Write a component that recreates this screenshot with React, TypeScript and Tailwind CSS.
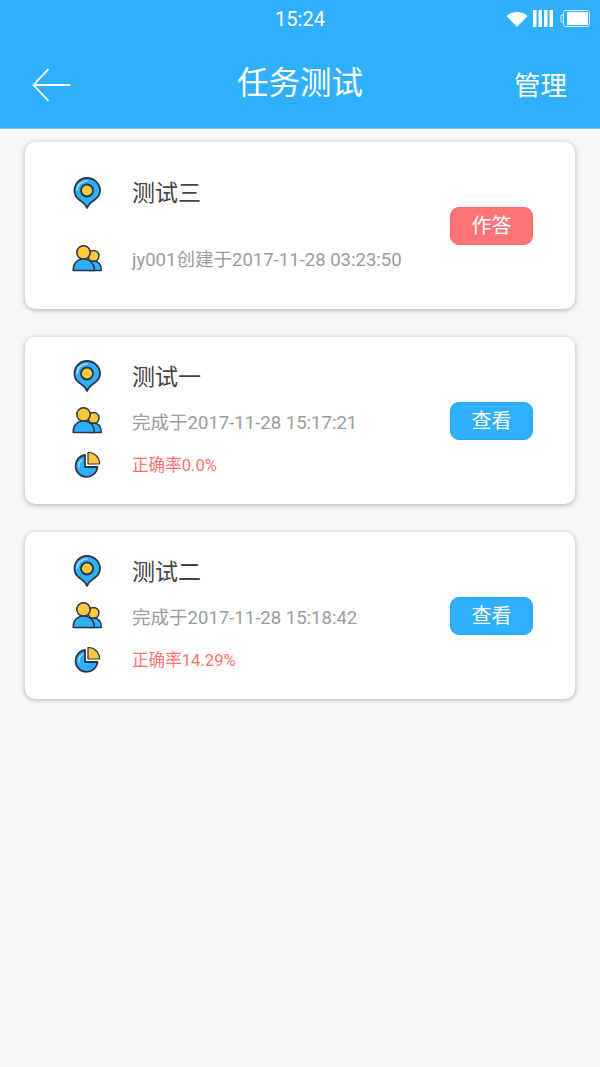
const PinIcon = () => (
    <svg width="30" height="34" viewBox="0 0 30 34" className="shrink-0">
        <path d="M15 32 C13.5 27.5 10 26 7 23.5 C3.5 21 2.5 17.5 2.5 14.5 C2.5 7.5 8 2 15 2 C22 2 28 7.5 28 14.5 C28 17.5 26.5 21 23 23.5 C20 26 16.5 27.5 15 32 Z" fill="#2fb0ff" stroke="#2b3446" strokeWidth="1.8" strokeLinejoin="round" />
        <path d="M5 14.5 C5 9 9.5 5 15 5" fill="none" stroke="#a9e0ff" strokeWidth="1.5" strokeLinecap="round" />
        <circle cx="15" cy="14.5" r="6" fill="#ffc83d" stroke="#2b3446" strokeWidth="1.8" />
    </svg>
);

const UsersIcon = () => (
    <svg width="30" height="28" viewBox="0 0 30 28" className="shrink-0">
        <circle cx="21.5" cy="11" r="5.5" fill="#ffc83d" stroke="#2b3446" strokeWidth="1.4" />
        <path d="M17 25.5 H29.2 C29.4 20 26.5 16.5 22 16 C18 16 16 19 17 25.5 Z" fill="#2fb0ff" stroke="#2b3446" strokeWidth="1.4" strokeLinejoin="round" />
        <circle cx="11.5" cy="7.5" r="6.7" fill="#ffc83d" stroke="#2b3446" strokeWidth="1.5" />
        <path d="M1.2 25.5 C1 19 5 14 11.5 14 C18 14 22.5 19 22.3 25.5 Z" fill="#2fb0ff" stroke="#2b3446" strokeWidth="1.5" strokeLinejoin="round" />
    </svg>
);

const PieIcon = () => (
    <svg width="28" height="28" viewBox="0 0 28 28" className="shrink-0">
        <path d="M12 4 A11 11 0 1 0 24.5 16 H12 Z" fill="#2fb0ff" stroke="#2b3446" strokeWidth="1.8" strokeLinejoin="round" />
        <path d="M6 16 A7 7 0 0 1 9 9" fill="none" stroke="#a9e0ff" strokeWidth="1.2" strokeLinecap="round" />
        <path d="M15 1.5 A11 11 0 0 1 26.5 13 H15 Z" fill="#ffc83d" stroke="#2b3446" strokeWidth="1.2" strokeLinejoin="round" />
    </svg>
);

type Task = {
    title: string;
    sub: string;
    rate?: string;
    action: string;
};

const tasks: Task[] = [
    { title: "测试三", sub: "jy001创建于2017-11-28 03:23:50", action: "作答" },
    { title: "测试一", sub: "完成于2017-11-28 15:17:21", rate: "正确率0.0%", action: "查看" },
    { title: "测试二", sub: "完成于2017-11-28 15:18:42", rate: "正确率14.29%", action: "查看" },
];

const TaskCard = ({ task }: { task: Task }) => {
    const isTodo = !task.rate;
    return (
        <div className="h-[167px] mx-[25px] bg-white rounded-[10px] shadow-[0_1px_5px_rgba(0,0,0,0.3)] flex items-center pl-[47px] pr-[42px]">
            <div className={`flex-1 flex flex-col ${isTodo ? "gap-[32px] pt-[3px]" : "gap-[11px] pb-[1px]"}`}>
                <div className="flex items-center h-[34px]">
                    <div className="w-[30px] flex justify-center mb-[3px]"><PinIcon /></div>
                    <span className="ml-[30px] text-[23px] leading-[34px] text-[#444444]">{task.title}</span>
                </div>
                <div className="flex items-center h-[34px]">
                    <div className="w-[30px] flex justify-center mb-[3px]"><UsersIcon /></div>
                    <span className="ml-[30px] text-[18.55px] leading-[34px] text-[#9b9b9b]">{task.sub}</span>
                </div>
                {task.rate && (
                    <div className="flex items-center h-[28px] mt-[1px]">
                        <div className="w-[30px] flex justify-center mb-[2px]"><PieIcon /></div>
                        <span className="ml-[30px] text-[16.6px] leading-[28px] text-[#ff7272]">{task.rate}</span>
                    </div>
                )}
            </div>
            <button
                className={`w-[83px] h-[38px] mt-[1px] rounded-[9px] border text-[20px] leading-none text-white ${
                    isTodo ? "bg-[#ff7577] border-[#f86a6c]" : "bg-[#2fb0ff] border-[#28a4f0]"
                }`}
            >
                {task.action}
            </button>
        </div>
    );
};

export default function App() {
    return (
        <div className="w-[600px] h-[1067px] bg-[#f7f7f7] font-['Roboto','Noto_Sans_CJK_SC',sans-serif] overflow-hidden">
            {/* status bar + title bar share one blue block */}
            <div className="h-[129px] bg-[#2fb0ff] text-white border-b border-[#7ccbff]">
                <div className="relative h-[38px] flex items-center justify-center">
                    <span className="text-[20px] leading-none">15:24</span>
                    <div className="absolute right-[10px] top-[10px] flex items-center">
                        <svg width="22" height="16" viewBox="0 0 22 16">
                            <path d="M0.5 5 C6 -0.5 16 -0.5 21.5 5 L11 16 Z" fill="#ffffff" />
                        </svg>
                        <svg width="20" height="17" viewBox="0 0 20 17" className="ml-[5px]">
                            <rect x="0" y="0" width="3.5" height="17" fill="#ffffff" />
                            <rect x="5.5" y="0" width="3.5" height="17" fill="#ffffff" />
                            <rect x="11" y="0" width="3.5" height="17" fill="#ffffff" />
                            <rect x="16.5" y="0" width="3.5" height="17" fill="#ffffff" />
                        </svg>
                        <svg width="30" height="17" viewBox="0 0 30 17" className="ml-[7px]">
                            <path d="M3 5 H1 V12 H3" fill="none" stroke="#d5efff" strokeWidth="1" />
                            <rect x="3.5" y="0.5" width="26" height="16" rx="2" fill="none" stroke="#d5efff" strokeWidth="1" />
                            <rect x="7" y="2" width="21" height="13" fill="#ffffff" />
                        </svg>
                    </div>
                </div>
                <div className="h-[90px] flex items-center justify-between pl-[32px] pr-[33px] relative">
                    <svg width="40" height="34" viewBox="0 0 40 34" className="mt-[4px]">
                        <path d="M16.5 1 L1.5 17 L16.5 33 M1.5 17 H38.5" fill="none" stroke="#ffffff" strokeWidth="1.8" />
                    </svg>
                    <span className="absolute left-0 right-0 mt-[2px] text-center text-[31.5px] leading-none pointer-events-none">任务测试</span>
                    <span className="text-[26.5px] leading-none mt-[7px]">管理</span>
                </div>
            </div>

            <div className="flex flex-col gap-[28px] pt-[13px]">
                {tasks.map((task) => (
                    <TaskCard key={task.title} task={task} />
                ))}
            </div>
        </div>
    );
}
